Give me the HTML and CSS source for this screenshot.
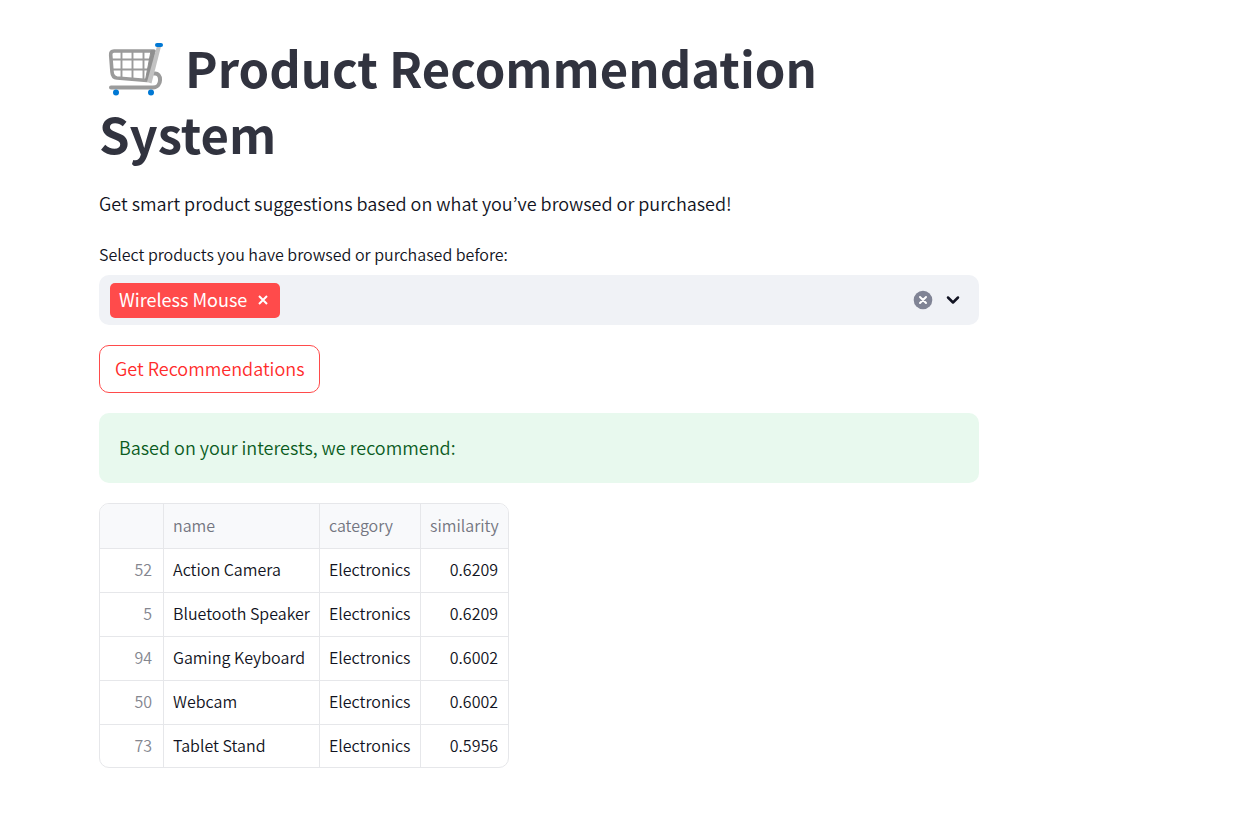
FILE: index.html
```html
<!DOCTYPE html>
<html lang="en">
<head>
<meta charset="utf-8">
<meta name="viewport" content="width=device-width, initial-scale=1">
<title>Product Recommendation System</title>
<link rel="stylesheet" href="styles.css">
</head>
<body>
<main class="page">
  <h1 class="title"><svg class="cart" viewBox="0 0 66 56" aria-hidden="true">
    <g fill="none" stroke-linecap="round" stroke-linejoin="round">
      <path d="M21.500 10V36M32.500 10V37M43.500 10V38M11.500 17.500H53M12.500 27.500H51" stroke="#9b9b9b" stroke-width="1.900"/>
      <path d="M54 9H14Q10.500 9 10.700 13L12 30Q12.400 35.500 17 36L47 38.500" stroke="#9b9b9b" stroke-width="3.600"/>
      <path d="M55 9L50 38H45.500L51 9Z" fill="#8f8f8f" stroke="#8f8f8f"/>
      <path d="M54 31.500C62 30 62.500 45.500 53 45.500H11" stroke="#9b9b9b" stroke-width="4"/>
    </g>
    <path d="M57 4L61 4.500L51.500 41.500L47 40Z" fill="#c2c2c2"/>
    <rect x="55" y="1" width="8" height="4" rx="2" fill="#0078d4"/>
    <circle cx="16" cy="50.500" r="3" fill="#0078d4"/>
    <circle cx="51" cy="50.500" r="3" fill="#0078d4"/>
  </svg> Product Recommendation System</h1>
  <p class="intro">Get smart product suggestions based on what you’ve browsed or purchased!</p>
  <form class="form">
    <label class="label" for="products">Select products you have browsed or purchased before:</label>
    <div class="select">
      <span class="tag">Wireless Mouse
        <button class="tag-remove" type="button" aria-label="Remove Wireless Mouse"><svg class="tag-icon" viewBox="0 0 10 10"><path d="M1 1L9 9M9 1L1 9"/></svg></button>
      </span>
      <input class="search" id="products" type="text" role="combobox" aria-expanded="false" autocomplete="off">
      <button class="icon-button" type="button" aria-label="Clear all"><svg class="clear-icon" viewBox="0 0 20 20"><circle cx="10" cy="10" r="9.300"/><path d="M7 7L13 13M13 7L7 13"/></svg></button>
      <button class="icon-button" type="button" aria-label="Open"><svg class="chevron" viewBox="0 0 20 20"><path d="M5 7.500L10 12.500L15 7.500"/></svg></button>
    </div>
    <button class="submit" type="button">Get Recommendations</button>
  </form>
  <div class="alert" role="status">Based on your interests, we recommend:</div>
  <div class="table-frame">
    <table class="table">
      <thead>
        <tr><th class="index" aria-label="index"></th><th class="name" scope="col">name</th><th class="category" scope="col">category</th><th class="similarity" scope="col">similarity</th></tr>
      </thead>
      <tbody>
        <tr><td class="index">52</td><td>Action Camera</td><td>Electronics</td><td class="number">0.6209</td></tr>
        <tr><td class="index">5</td><td>Bluetooth Speaker</td><td>Electronics</td><td class="number">0.6209</td></tr>
        <tr><td class="index">94</td><td>Gaming Keyboard</td><td>Electronics</td><td class="number">0.6002</td></tr>
        <tr><td class="index">50</td><td>Webcam</td><td>Electronics</td><td class="number">0.6002</td></tr>
        <tr><td class="index">73</td><td>Tablet Stand</td><td>Electronics</td><td class="number">0.5956</td></tr>
      </tbody>
    </table>
  </div>
</main>
</body>
</html>
```
FILE: styles.css
```css
* { box-sizing: border-box; }
body {
  margin: 0;
  background: #fff;
  color: #111322;
  font-family: "Noto Sans CJK KR", "Noto Sans", sans-serif;
  font-size: 18px;
  font-weight: 350;
  line-height: 30px;
}
button, input { font: inherit; color: inherit; }
.page {
  max-width: 1078px;
  padding: 34px 99px;
}
.title {
  margin: 0 0 22px;
  color: #31333f;
  font-size: 49px;
  font-weight: 700;
  line-height: 66px;
}
.cart {
  width: 68px;
  height: 56px;
  margin-right: 7px;
  vertical-align: -10px;
}
.intro { margin: 0 0 24px; }
.form {
  display: flex;
  flex-direction: column;
  align-items: flex-start;
}
.label {
  margin-bottom: 9px;
  font-size: 16px;
  line-height: 24px;
}
.select {
  display: flex;
  align-items: center;
  align-self: stretch;
  gap: 10px;
  height: 50px;
  margin-bottom: 20px;
  padding: 0 16px 0 11px;
  border-radius: 10px;
  background: #f0f2f6;
}
.tag {
  display: flex;
  align-items: center;
  gap: 7px;
  height: 35px;
  padding: 0 8px 2px 9px;
  border-radius: 5px;
  background: #ff4b4b;
  color: #fff;
  font-weight: 400;
}
.tag-remove, .icon-button {
  display: flex;
  padding: 0;
  border: 0;
  background: none;
  cursor: pointer;
}
.tag-remove { padding: 5px 4px 4px; }
.tag-icon {
  width: 10px;
  height: 10px;
  fill: none;
  stroke: #fff;
  stroke-width: 2;
}
.search {
  flex: 1;
  min-width: 0;
  border: 0;
  outline: 0;
  background: transparent;
}
.clear-icon, .chevron {
  width: 20px;
  height: 20px;
  fill: none;
  stroke-linecap: round;
  stroke-linejoin: round;
}
.clear-icon circle { fill: #808495; }
.clear-icon path { stroke: #fff; stroke-width: 2; }
.chevron { stroke: #111322; stroke-width: 2.5; }
.submit {
  height: 48px;
  margin-bottom: 20px;
  padding: 0 15px 2px;
  border: 1px solid #ff4b4b;
  border-radius: 10px;
  background: #fff;
  color: #ff2b2b;
}
.alert {
  margin-bottom: 20px;
  padding: 19px 20px 21px;
  border-radius: 10px;
  background: #e8f9ee;
  color: #0b5c1e;
}
.table-frame {
  width: 410px;
  max-width: 100%;
  overflow: hidden;
  border: 1px solid #e6e7ea;
  border-radius: 10px;
}
.table {
  width: 100%;
  border-spacing: 0;
  table-layout: fixed;
  font-size: 16px;
  line-height: 24px;
}
.table th, .table td {
  height: 44px;
  padding: 0 10px 3px 9px;
  border: 0 solid #e6e7ea;
  border-width: 0 1px 1px 0;
  text-align: left;
  white-space: nowrap;
}
.table th {
  height: 45px;
  padding: 0 9px 3px;
  background: #f8f9fb;
  color: #737580;
  font-weight: 350;
}
.table th:last-child, .table td:last-child { border-right: 0; }
.table tr:last-child td {
  height: 42px;
  border-bottom: 0;
}
.table .index {
  width: 64px;
  padding-right: 11px;
  color: #84868f;
  text-align: right;
}
.name { width: 156px; }
.category { width: 101px; }
.table .number { text-align: right; }
```
